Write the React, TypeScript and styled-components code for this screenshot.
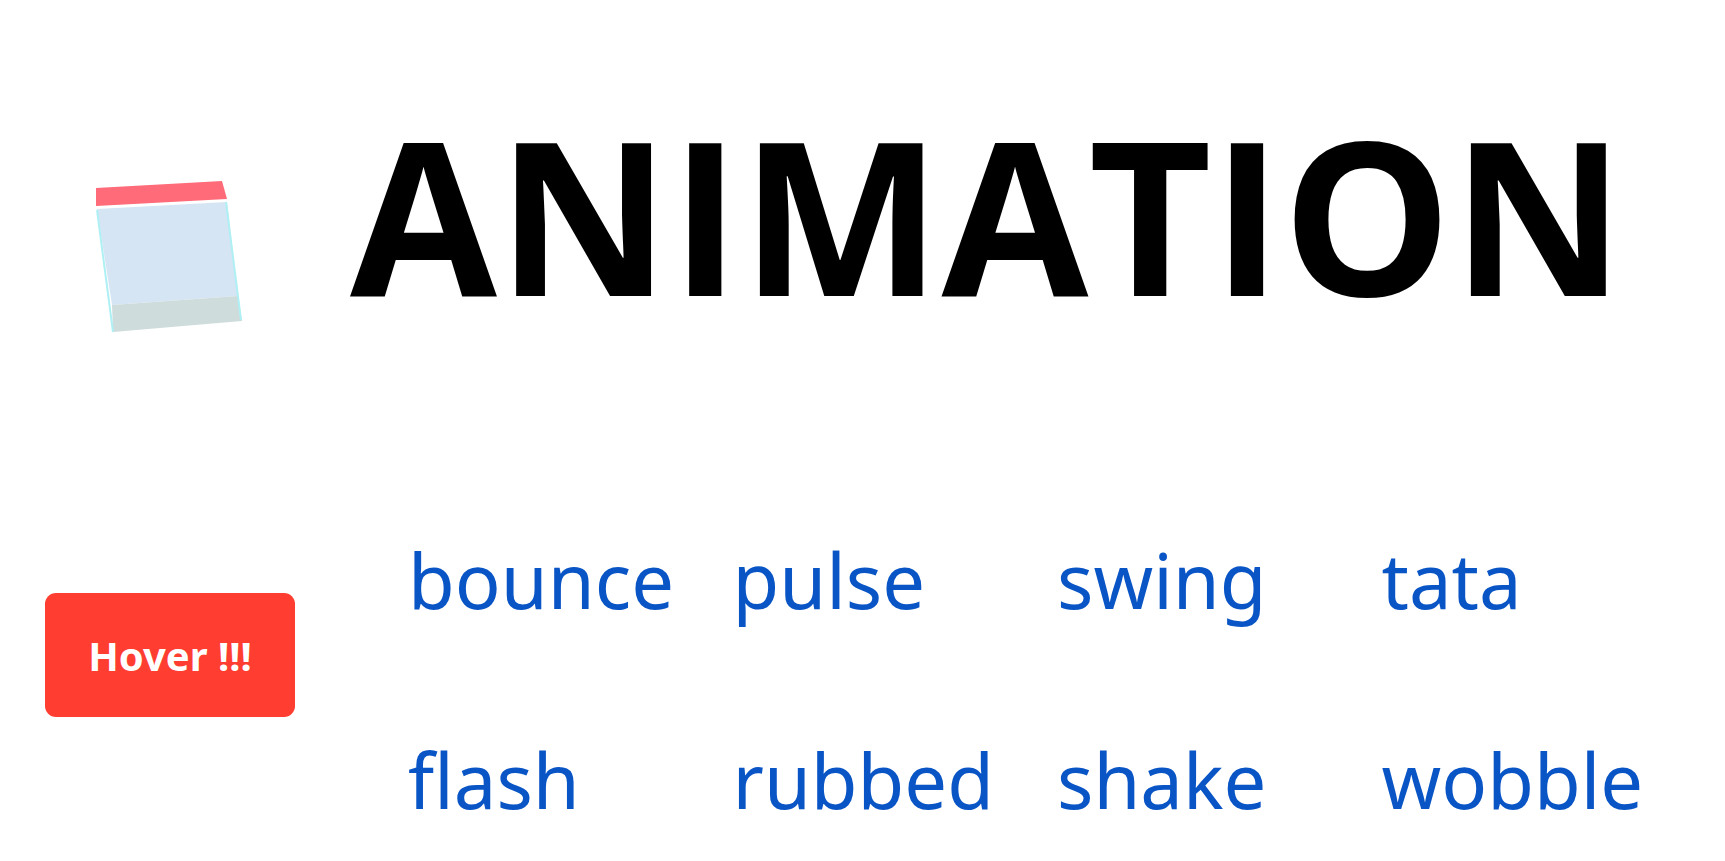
import React from "react";
import styled, { createGlobalStyle } from "styled-components";

const Global = createGlobalStyle`
  html, body { margin: 0; padding: 0; background: #ffffff; }
  body { font-family: "Noto Sans", "Open Sans", sans-serif; }
`;

const Page = styled.div`
  display: grid;
  grid-template-columns: 348px 1fr;
  grid-template-rows: 440px auto;
  width: 1725px;
`;

const CubeCell = styled.div`
  display: flex;
  align-items: flex-start;
  padding: 178px 0 0 94px;
`;

const TitleCell = styled.div`
  display: flex;
  align-items: flex-start;
`;

const Title = styled.h1`
  margin: 0 0 0 2px;
  font-family: "Open Sans", sans-serif;
  font-weight: 700;
  font-size: 213px;
  line-height: 1;
  color: #000;
  letter-spacing: 0;
  padding-top: 107px;
`;

const ButtonCell = styled.div`
  display: flex;
  align-items: flex-start;
  padding: 153px 0 0 45px;
`;

const HoverButton = styled.button`
  width: 250px;
  height: 124px;
  border: none;
  border-radius: 11px;
  background: #ff3d30;
  color: #ffffff;
  font-family: "Noto Sans", sans-serif;
  font-weight: 700;
  font-size: 40px;
  cursor: pointer;
  padding: 0;
`;

const LinkGrid = styled.div`
  display: grid;
  grid-template-columns: repeat(4, 324.5px);
  grid-auto-rows: 100px;
  row-gap: 100px;
  padding: 90px 0 0 60px;
`;

const AnimLink = styled.a`
  font-family: "Noto Sans", sans-serif;
  font-size: 76px;
  line-height: 100px;
  color: #0a55c6;
  text-decoration: none;
`;

const Cube = () => (
  <svg width="150" height="158" viewBox="94 178 150 158">
    <polygon points="96,188 222,181 227,199 96,206" fill="#ff6b78" />
    <polygon points="97,209 227,202 238,296 112,305" fill="#d6e5f4" />
    <polygon points="112,305 238,296 242,321 113,332" fill="#cfdcdc" />
    <polyline points="97,210 113,332" stroke="#aef0f4" strokeWidth="2" fill="none" />
    <polyline points="226,202 241,320" stroke="#aef0f4" strokeWidth="2" fill="none" />
  </svg>
);

const links = ["bounce", "pulse", "swing", "tata", "flash", "rubbed", "shake", "wobble"];

export default function App() {
  return (
    <>
      <Global />
      <Page>
        <CubeCell>
          <Cube />
        </CubeCell>
        <TitleCell>
          <Title>ANIMATION</Title>
        </TitleCell>
        <ButtonCell>
          <HoverButton>Hover !!!</HoverButton>
        </ButtonCell>
        <LinkGrid>
          {links.map((l) => (
            <div key={l}>
              <AnimLink href="#">{l}</AnimLink>
            </div>
          ))}
        </LinkGrid>
      </Page>
    </>
  );
}
